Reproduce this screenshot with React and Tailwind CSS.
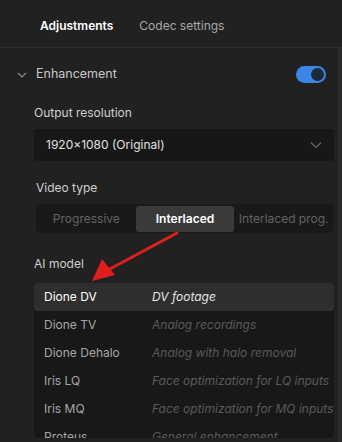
import { useState } from 'react';

const MODELS = [
  { name: 'Dione DV', desc: 'DV footage' },
  { name: 'Dione TV', desc: 'Analog recordings' },
  { name: 'Dione Dehalo', desc: 'Analog with halo removal' },
  { name: 'Iris LQ', desc: 'Face optimization for LQ inputs' },
  { name: 'Iris MQ', desc: 'Face optimization for MQ inputs' },
  { name: 'Proteus', desc: 'General enhancement' },
];

const VIDEO_TYPES = ['Progressive', 'Interlaced', 'Interlaced prog.'];

export default function App() {
  const [model, setModel] = useState('Dione DV');
  const [videoType, setVideoType] = useState('Interlaced');
  const [enabled, setEnabled] = useState(true);

  return (
    <div className="relative w-[342px] h-[442px] overflow-hidden bg-[#212121] text-[12px] font-['Inter','Liberation_Sans',sans-serif]">

      {/* Tabs */}
      <div className="flex h-[48px] items-center gap-[26px] pl-[40px] pt-[4px] border-b border-[#303030]">
        <span className="font-semibold text-white">Adjustments</span>
        <span className="text-[#a8a8a8]">Codec settings</span>
      </div>

      <div className="flex">
        <div className="flex-1 min-w-0">
          {/* Enhancement header */}
          <div className="flex h-[50px] items-center pl-[17px] pr-[10px] pt-[3px]">
            <svg className="w-[10px] h-[10px] text-[#8a8a8a]" fill="none" viewBox="0 0 10 10" stroke="currentColor" strokeWidth={1.2}>
              <path d="M1 3l4 4 4-4" />
            </svg>
            <span className="ml-[9px] text-[#c8c8c8] text-[12.5px]">Enhancement</span>
            <button
              onClick={() => setEnabled(!enabled)}
              className={`ml-auto w-[30px] h-[17px] rounded-full flex items-center px-[2px] ${enabled ? 'bg-[#3a85e6] justify-end' : 'bg-[#444] justify-start'}`}
            >
              <span className="w-[13px] h-[13px] rounded-full bg-[#1f2a38]" />
            </button>
          </div>

          <div className="pl-[34px] pr-[2px]">
            {/* Output resolution */}
            <p className="text-[#d0d0d0] mt-[6px] leading-[18px]">Output resolution</p>
            <div className="mt-[7px] h-[32px] rounded-[4px] bg-[#171717] flex items-center pl-[12px] pr-[12px]">
              <span className="text-[#e2e2e2]">1920×1080 (Original)</span>
              <svg className="ml-auto w-[12px] h-[8px] text-[#666]" fill="none" viewBox="0 0 12 8" stroke="currentColor" strokeWidth={1.2}>
                <path d="M1 1.5l5 5 5-5" />
              </svg>
            </div>

            {/* Video type */}
            <p className="text-[#d0d0d0] mt-[18px] ml-[2px] leading-[18px]">Video type</p>
            <div className="mt-[7px] ml-[2px] h-[29px] rounded-[4px] bg-[#191919] flex items-center px-[1px]">
              {VIDEO_TYPES.map(v => (
                <button
                  key={v}
                  onClick={() => setVideoType(v)}
                  className={`h-[26px] flex-1 rounded-[3px] whitespace-nowrap ${
                    videoType === v ? 'bg-[#3a3a3a] text-white font-semibold' : 'text-[#636363]'
                  }`}
                >
                  {v}
                </button>
              ))}
            </div>

            {/* AI model */}
            <p className="text-[#d0d0d0] mt-[22px] leading-[18px]">AI model</p>
            <div className="mt-[10px] h-[155px] rounded-[4px] bg-[#181818] overflow-hidden">
              {MODELS.map(m => {
                const active = m.name === model;
                return (
                  <button
                    key={m.name}
                    onClick={() => setModel(m.name)}
                    className={`w-full h-[28px] flex items-center px-[10px] rounded-[3px] text-left whitespace-nowrap ${active ? 'bg-[#2e2e2e]' : ''}`}
                  >
                    <span className={`w-[108px] shrink-0 ${active ? 'text-white' : 'text-[#a6a6a6]'}`}>{m.name}</span>
                    <span className={`italic ${active ? 'text-[#e6e6e6]' : 'text-[#5a5a5a]'}`}>{m.desc}</span>
                  </button>
                );
              })}
            </div>
          </div>
        </div>

        {/* Scrollbar track */}
        <div className="w-[4px] h-[394px] bg-[#2b2b2b] ml-[2px]" />
      </div>

      {/* Annotation arrow */}
      <svg className="absolute left-0 top-0 pointer-events-none" width="342" height="442">
        <line x1="177" y1="233" x2="108" y2="270" stroke="#e01e1e" strokeWidth="3" strokeLinecap="round" />
        <polygon points="92,281 102,259 115,275" fill="#e01e1e" />
      </svg>
    </div>
  );
}
